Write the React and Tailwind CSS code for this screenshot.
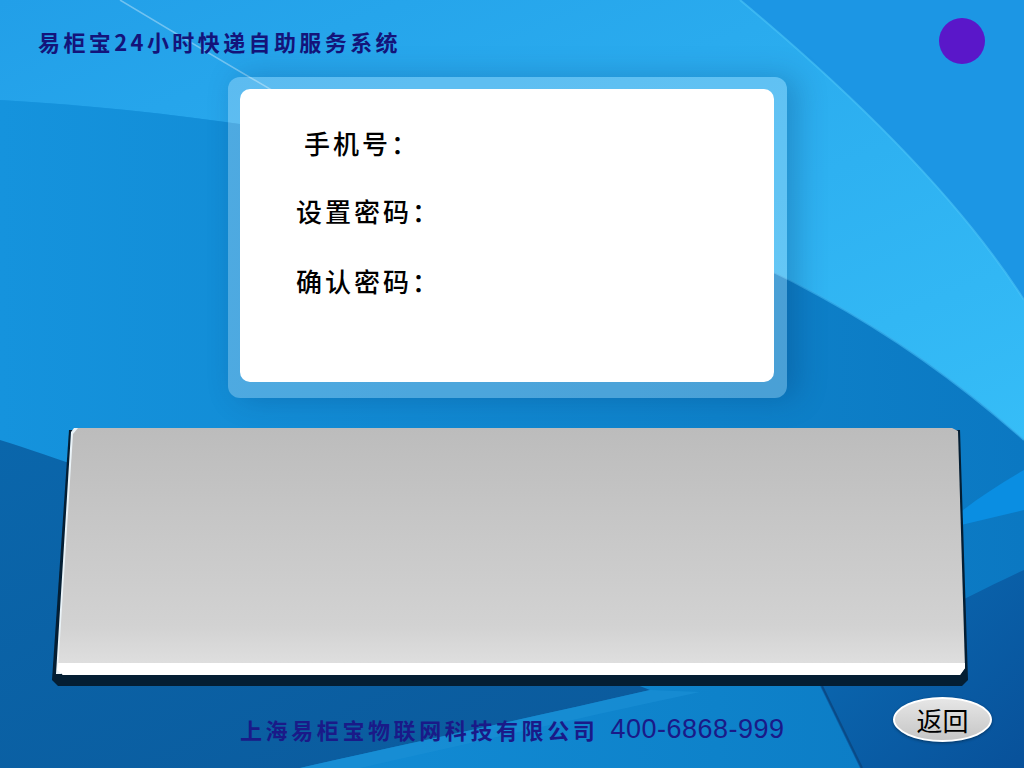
import React from "react";

const cjk = { fontFamily: '"Noto Sans CJK SC", "Noto Sans", sans-serif' };
const latin = { fontFamily: '"Liberation Sans", Arial, sans-serif' };

// wallpaper: blue swooshes behind everything
const Wallpaper = () => (
  <svg className="absolute inset-0" width="1024" height="768" viewBox="0 0 1024 768">
    <defs>
      <linearGradient id="base" x1="0" y1="0" x2="0" y2="1">
        <stop offset="0" stopColor="#1c98e2" />
        <stop offset="0.55" stopColor="#1390dc" />
        <stop offset="1" stopColor="#0f82cc" />
      </linearGradient>
      <linearGradient id="band" x1="0" y1="0" x2="1" y2="1">
        <stop offset="0" stopColor="#229fe8" />
        <stop offset="1" stopColor="#36bdf7" />
      </linearGradient>
      <linearGradient id="under" x1="0" y1="0" x2="1" y2="0">
        <stop offset="0" stopColor="#1593dd" />
        <stop offset="0.7" stopColor="#0e82ca" />
        <stop offset="1" stopColor="#0b78c2" />
      </linearGradient>
      <linearGradient id="dark" x1="0" y1="0" x2="1" y2="1">
        <stop offset="0" stopColor="#0a66ab" />
        <stop offset="1" stopColor="#0b5a9c" />
      </linearGradient>
      <linearGradient id="corner" x1="0" y1="0" x2="1" y2="1">
        <stop offset="0" stopColor="#0b6cb4" />
        <stop offset="1" stopColor="#08519a" />
      </linearGradient>
    </defs>
    <rect width="1024" height="768" fill="url(#base)" />
    {/* light swoosh band from top to right */}
    <path d="M0,0 L740,0 C860,100 960,200 1024,300 L1024,440 C900,330 760,250 560,190 C380,140 180,110 0,100 Z" fill="url(#band)" />
    {/* top-right beyond the band */}
    <path d="M740,0 C860,100 960,200 1024,300 L1024,0 Z" fill="#1c96e4" />
    <path d="M740,0 C860,100 960,200 1024,300" stroke="#4cc6f8" strokeWidth="2" fill="none" opacity="0.6" />
    {/* area under the lower curve */}
    <path d="M0,100 C180,110 380,140 560,190 C760,250 900,330 1024,440 L1024,768 L0,768 Z" fill="url(#under)" />
    <path d="M560,190 C760,250 900,330 1024,440" stroke="#3ab4f0" strokeWidth="2" fill="none" opacity="0.7" />
    {/* bright wedge on the right */}
    <path d="M1024,470 C990,490 960,510 940,530 L1024,510 Z" fill="#0a8ee2" />
    {/* dark lower left */}
    <path d="M0,440 C160,490 420,600 650,690 C520,720 400,745 300,768 L0,768 Z" fill="url(#dark)" />
    <path d="M650,690 C520,720 400,745 300,768 L360,768 C450,748 560,722 700,692 Z" fill="#1a8fd4" opacity="0.7" />
    {/* dark lower right */}
    <path d="M820,686 C880,640 960,600 1024,570 L1024,768 L860,768 Z" fill="url(#corner)" />
    <path d="M822,686 L862,768" stroke="#0a4a86" strokeWidth="2" fill="none" />
    {/* thin light line upper left */}
    <path d="M120,0 C170,30 220,60 275,92" stroke="#ffffff" strokeWidth="1.5" fill="none" opacity="0.35" />
  </svg>
);

const Field = ({ label, className }) => (
  <div className={`h-[40px] flex items-center text-[26px] tracking-[3px] font-medium text-black ${className}`} style={cjk}>
    {label}
  </div>
);

export default function App() {
  return (
    <div className="relative w-[1024px] h-[768px] overflow-hidden bg-[#1890dc]">
      <Wallpaper />
      <div className="relative flex flex-col w-full h-full">
        {/* header */}
        <div className="h-[77px] flex justify-between items-start pt-[18px] pl-[38px] pr-[39px]">
          <div className="text-[22px] leading-[46px] tracking-[3.4px] font-bold text-[#14147a]" style={cjk}>
            易柜宝24小时快递自助服务系统
          </div>
          <div className="w-[46px] h-[46px] rounded-full bg-[#5a17c9]" />
        </div>

        {/* form card */}
        <div className="ml-[228px] w-[559px] h-[321px] rounded-[12px] bg-white/25 pt-[12px] pl-[12px] shadow-[10px_0_30px_rgba(0,40,90,0.25)]">
          <div className="w-[534px] h-[293px] bg-white rounded-[10px] pt-[33px] pl-[56px] flex flex-col">
            <Field label="手机号：" className="pl-[8px]" />
            <Field label="设置密码：" className="mt-[28px]" />
            <Field label="确认密码：" className="mt-[30px]" />
          </div>
        </div>

        {/* keypad panel */}
        <div className="relative mt-[30px] ml-[52px] w-[916px] h-[258px]">
          <div className="absolute inset-0 bg-[#041e33] [clip-path:polygon(17px_2px,908px_2px,916px_252px,910px_258px,6px_258px,0_252px)]" />
          <div className="absolute inset-0 bg-[#eaf3f8] [clip-path:polygon(19px_4px,22px_0,28px_0,24px_8px,9px_246px,4px_246px)]" />
          <div className="absolute left-0 top-0 w-[914px] h-[247px] bg-linear-to-b from-[#bcbcbc] via-[#d2d2d2] via-[80%] to-[#e2e2e2] [clip-path:polygon(26px_0,900px_0,906px_3px,913px_240px,908px_247px,11px_247px,6px_242px,21px_6px)]" />
          <div className="absolute left-0 top-[235px] w-[914px] h-[12px] bg-white [clip-path:polygon(6px_0,913px_0,913px_5px,908px_12px,11px_12px,5px_7px)]" />
        </div>

        {/* footer */}
        <div className="flex items-start h-[82px]">
          <div className="ml-[240px] mt-[27px] h-[32px] flex items-center text-[#1a1a88] whitespace-nowrap">
            <span className="text-[22px] tracking-[3.6px] font-bold" style={cjk}>上海易柜宝物联网科技有限公司</span>
            <span className="ml-[12px] text-[27px] tracking-[0.5px]" style={latin}>400-6868-999</span>
          </div>
          <div
            className="ml-auto mr-[32px] mt-[11px] w-[99px] h-[45px] rounded-[50%] border-2 border-white bg-linear-to-b from-[#e6e6e6] to-[#c6c6c6] flex items-center justify-center text-[26px] text-black shadow-[0_1px_3px_rgba(0,0,0,0.4)]"
            style={cjk}
          >
            返回
          </div>
        </div>
      </div>
    </div>
  );
}
